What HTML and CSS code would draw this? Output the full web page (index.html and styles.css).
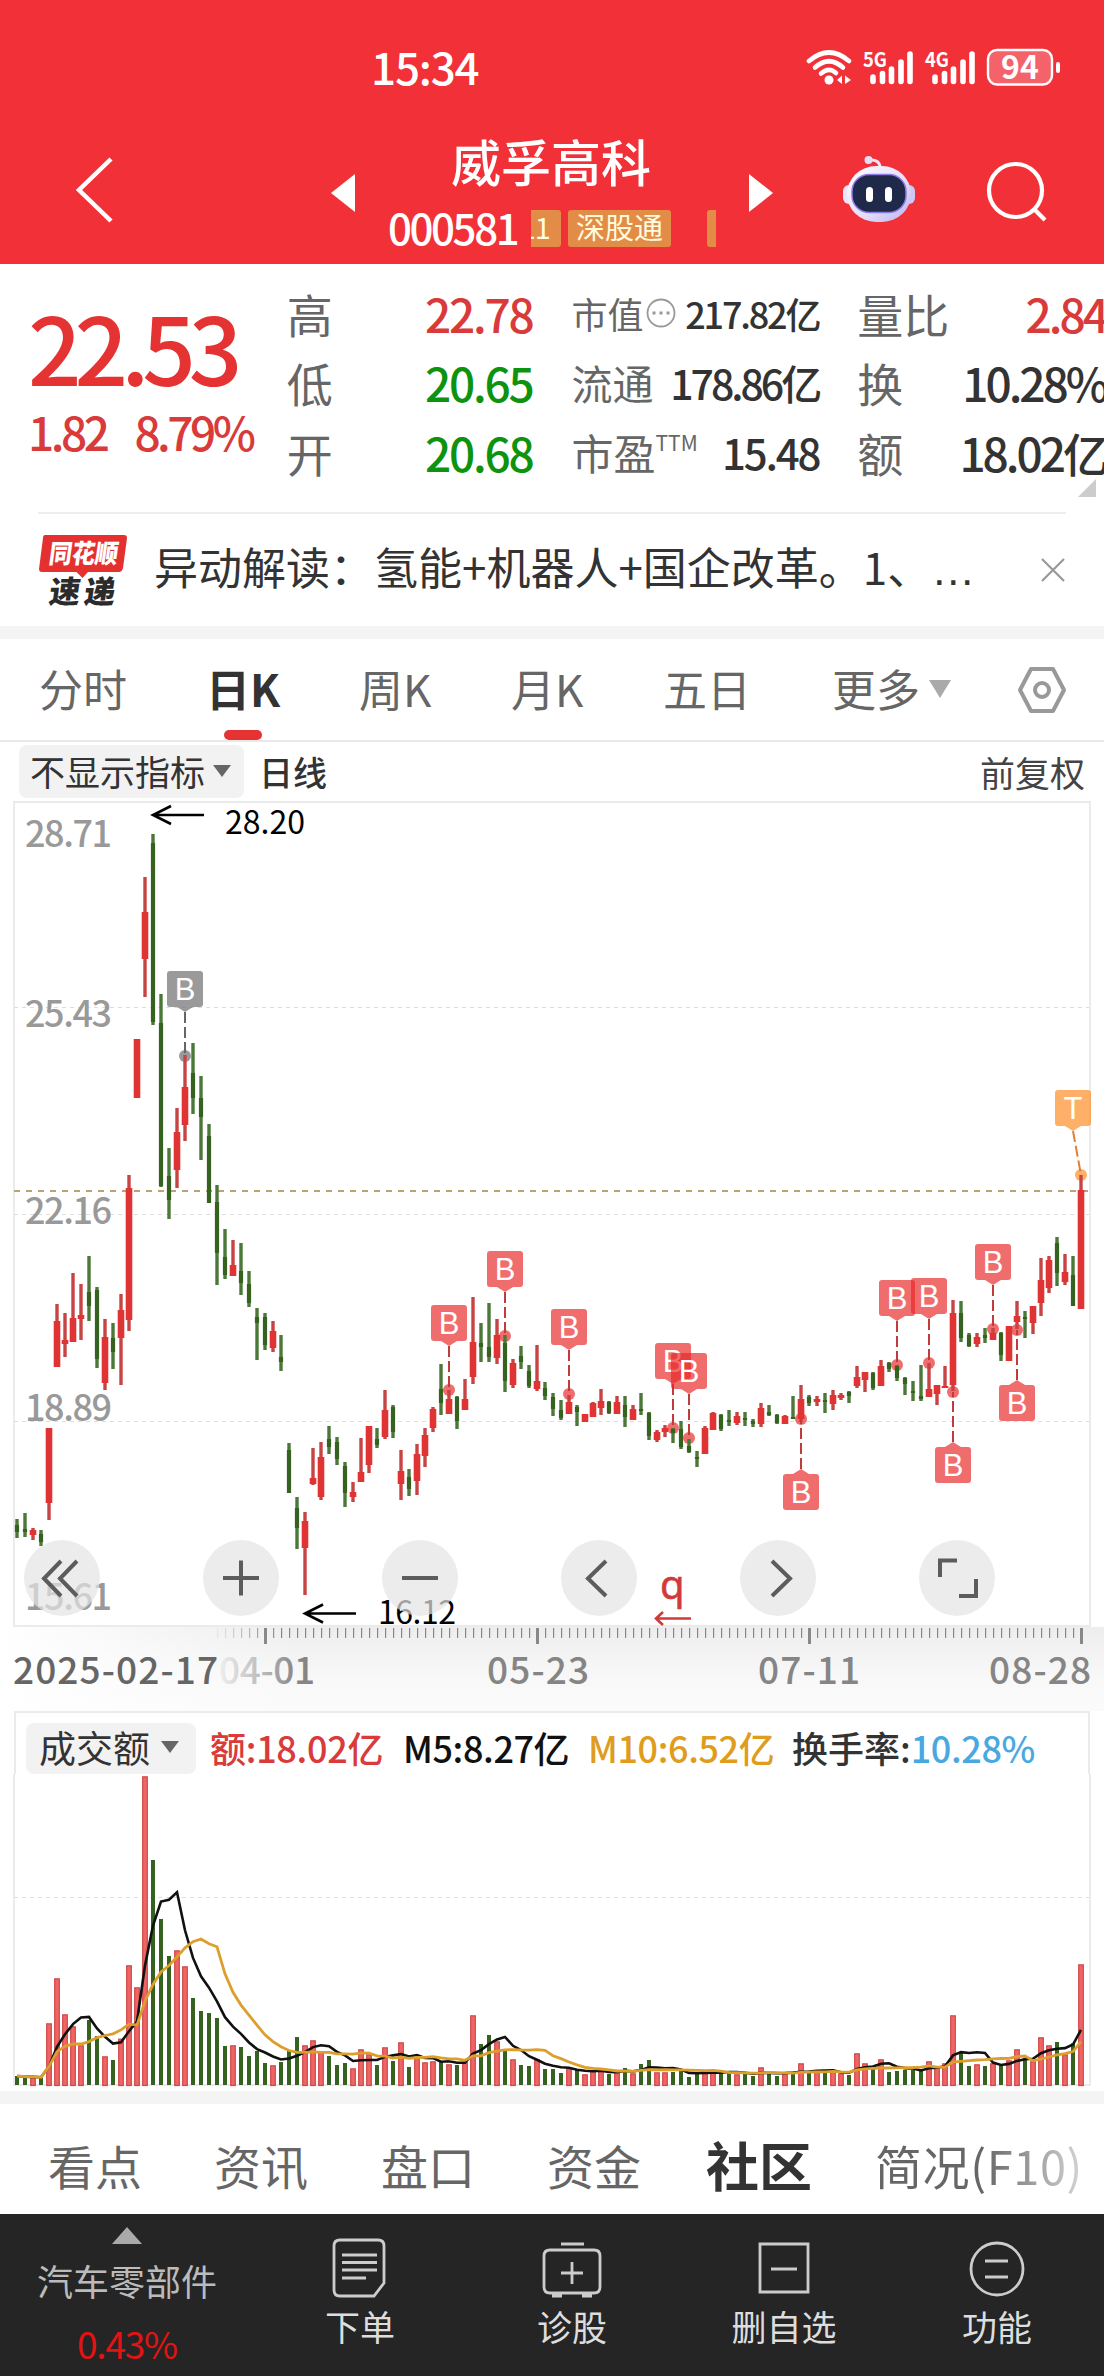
FILE: index.html
```html
<!DOCTYPE html>
<html lang="zh-CN">
<head>
    <meta charset="UTF-8">
    <meta name="viewport" content="width=device-width, initial-scale=1.0">
    <title>威孚高科 000581</title>
    <link rel="stylesheet" href="styles.css">
</head>
<body>
    <header class="top">
        <div class="status">
            <span class="clock">15:34</span>
            <svg class="status-icons" width="260" height="44" viewBox="804 46 260 44">
                <g fill="none" stroke="#fff" stroke-width="4.6" stroke-linecap="round">
                    <path d="M809 61Q829 44 849 61"/>
                    <path d="M815 67.500Q829 55 843 67.500"/>
                    <path d="M821 73.500Q829 66.500 836 73"/>
                </g>
                <circle cx="829" cy="80" r="4.500" fill="#fff"/>
                <path d="M837 80l5-4.500v8.500zM851 80l-6-4.500v8.500z" fill="#fff"/>
                <g stroke="#fff" stroke-width="5.600" stroke-linecap="round">
                    <path d="M873 77v4.500M882.500 73.500v8M891.500 69v12.500M901 62v19.500M910 54v27.500"/>
                    <path d="M935 77v4.500M944.500 73.500v8M953.500 69v12.500M963 62v19.500M972 54v27.500"/>
                </g>
                <text class="net" x="863" y="67" textLength="24" lengthAdjust="spacingAndGlyphs">5G</text>
                <text class="net" x="925" y="67" textLength="24" lengthAdjust="spacingAndGlyphs">4G</text>
                <rect x="988" y="50" width="64" height="34.500" rx="9" fill="#f5636a" stroke="#fff" stroke-width="2.400"/>
                <rect x="1056" y="62" width="4" height="11" rx="2" fill="#fff"/>
                <text class="battery" x="1001" y="79">94</text>
            </svg>
        </div>
        <div class="titlebar">
            <svg class="back" width="40" height="68" viewBox="0 0 40 68"><path d="M36 3L4 34l32 31" fill="none" stroke="#fff" stroke-width="4.500"/></svg>
            <svg class="prev" width="24" height="38" viewBox="0 0 24 38"><path d="M24 0v38L0 19z" fill="#fff"/></svg>
            <div class="title">
                <div class="name">威孚高科</div>
                <div class="code-line">
                    <span class="code">000581</span>
                    <div class="tags">
                        <span class="tag tag-cut">L1</span>
                        <span class="tag">深股通</span>
                        <span class="tag tag-next"></span>
                    </div>
                </div>
            </div>
            <svg class="next" width="24" height="38" viewBox="0 0 24 38"><path d="M0 0v38l24-19z" fill="#fff"/></svg>
            <svg class="robot" width="74" height="70" viewBox="843 154 74 70">
                <defs>
                    <linearGradient id="shell" x1="0" y1="0" x2="1" y2="1">
                        <stop offset="0" stop-color="#fff"/>
                        <stop offset=".6" stop-color="#e3dcfa"/>
                        <stop offset="1" stop-color="#b9b3ee"/>
                    </linearGradient>
                </defs>
                <path d="M870 160q11-1 11 8" fill="none" stroke="#eee6f5" stroke-width="3"/>
                <circle cx="869.500" cy="160" r="4" fill="#e6def3"/>
                <rect x="844" y="185" width="12" height="19" rx="6" fill="#eae5fa"/>
                <rect x="904" y="185" width="12" height="19" rx="6" fill="#cdc9f2"/>
                <rect x="848" y="166" width="64" height="56" rx="29" fill="url(#shell)"/>
                <rect x="853" y="174.500" width="54" height="38" rx="17" fill="#1f2a4a" stroke="#8d7be6" stroke-width="1.500"/>
                <rect x="867" y="187" width="7" height="15" rx="3.500" fill="#fff"/>
                <rect x="886" y="187" width="7" height="15" rx="3.500" fill="#fff"/>
            </svg>
            <svg class="search" width="64" height="64" viewBox="986 160 64 64" fill="none" stroke="#fff" stroke-width="4.200">
                <circle cx="1016.500" cy="190.500" r="26.500"/>
                <path d="M1035 209l11 11"/>
            </svg>
        </div>
    </header>

    <section class="quote">
        <div class="price-box">
            <div class="price">22.53</div>
            <div class="change"><span>1.82</span><span>8.79%</span></div>
        </div>
        <div class="col col-a">
            <div class="cell"><span class="label">高</span><span class="val up">22.78</span></div>
            <div class="cell"><span class="label">低</span><span class="val down">20.65</span></div>
            <div class="cell"><span class="label">开</span><span class="val down">20.68</span></div>
        </div>
        <div class="col col-b">
            <div class="cell cell-s"><span class="label">市值</span><svg class="info" width="30" height="32" viewBox="0 0 30 32"><circle cx="15" cy="16" r="13.500" fill="none" stroke="#999" stroke-width="1.800"/><path d="M6.500 16h3M13.500 16h3M20.500 16h3" stroke="#999" stroke-width="3"/></svg><span class="val">217.82亿</span></div>
            <div class="cell cell-m"><span class="label">流通</span><span class="val">178.86亿</span></div>
            <div class="cell cell-l"><span class="label">市盈</span><span class="ttm">TTM</span><span class="val">15.48</span></div>
        </div>
        <div class="col col-c">
            <div class="cell"><span class="label">量比</span><span class="val up">2.84</span></div>
            <div class="cell"><span class="label">换</span><span class="val">10.28%</span></div>
            <div class="cell"><span class="label">额</span><span class="val">18.02亿</span></div>
        </div>
        <i class="corner"></i>
    </section>

    <section class="news">
        <svg class="news-logo" width="90" height="76" viewBox="38 530 90 76">
            <path d="M45 533h79q3 0 3 3l-4 30q-1 4-4 4H88l-5.500 6-6-6H42q-3 0-3-3l4-31q0-3 2-3z" fill="#e53030"/>
            <text class="logo-a" transform="translate(48 561) skewX(-8)" textLength="69" lengthAdjust="spacingAndGlyphs">同花顺</text>
            <text class="logo-b" transform="translate(48 601) skewX(-8)">速</text>
            <text class="logo-b" transform="translate(83 601) skewX(-8)">递</text>
        </svg>
        <span class="news-text">异动解读：氢能+机器人+国企改革。1、<span class="dots">…</span></span>
        <svg class="close" width="24" height="24" viewBox="0 0 24 24"><path d="M1 1l22 22M23 1L1 23" stroke="#999" stroke-width="2.200"/></svg>
    </section>

    <nav class="periods">
        <span>分时</span>
        <span class="active">日K</span>
        <span>周K</span>
        <span>月K</span>
        <span>五日</span>
        <span>更多<svg width="22" height="18" viewBox="0 0 22 18"><path d="M0 0h22L11 18z" fill="#aaa"/></svg></span>
        <svg class="gear" width="50" height="48" viewBox="0 0 50 48" fill="none" stroke="#999" stroke-width="4" stroke-linejoin="round">
            <path d="M14 3h22l11 21-11 21H14L3 24z"/>
            <circle cx="25" cy="24" r="7"/>
        </svg>
    </nav>

    <div class="indicator">
        <span class="chip">不显示指标<i class="caret"></i></span>
        <span class="line-name">日线</span>
        <span class="adjust">前复权</span>
    </div>

    <div class="kchart">
        <svg id="kline" width="1104" height="826" viewBox="0 801 1104 826"></svg>
        <div class="controls">
            <button><svg viewBox="0 0 76 76"><path d="M37 21L20 38.500 37 56M53 21L36 38.500 53 56"/></svg></button>
            <button><svg viewBox="0 0 76 76"><path d="M20 38h36M38 20.500v35"/></svg></button>
            <button><svg viewBox="0 0 76 76"><path d="M20 38h36"/></svg></button>
            <button><svg viewBox="0 0 76 76"><path d="M45 21L27 38.500 45 56"/></svg></button>
            <button><svg viewBox="0 0 76 76"><path d="M32 21l18 17.500L32 56"/></svg></button>
            <button><svg viewBox="0 0 76 76"><path d="M21 37V20.500h17M57 39v17H40"/></svg></button>
        </div>
    </div>

    <div class="axis">
        <svg id="axis" width="1104" height="84" viewBox="0 1627 1104 84"></svg>
    </div>

    <div class="volume">
        <div class="vol-head">
            <span class="chip">成交额<i class="caret"></i></span>
            <span class="v-amt">额:18.02亿</span>
            <span class="v-m5">M5:8.27亿</span>
            <span class="v-m10">M10:6.52亿</span>
            <span class="v-rate">换手率:<b>10.28%</b></span>
        </div>
        <svg id="vol" width="1104" height="313" viewBox="0 1774 1104 313"></svg>
    </div>

    <nav class="tabs">
        <span>看点</span>
        <span>资讯</span>
        <span>盘口</span>
        <span>资金</span>
        <span class="active">社区</span>
        <span class="fade">简况(F10)</span>
    </nav>

    <footer class="bottom">
        <div class="sector">
            <svg width="30" height="17" viewBox="0 0 30 17"><path d="M0 17h30L15 0z" fill="#aaa"/></svg>
            <span class="sector-name">汽车零部件</span>
            <span class="sector-rate">0.43%</span>
        </div>
        <div class="item">
            <svg viewBox="0 0 64 64"><path d="M12 4h38q6 0 6 6v37L46 60H12q-6 0-6-6V10q0-6 6-6zM14 19h35M14 26.500h35M14 34h35M14 42h24"/></svg>
            <span>下单</span>
        </div>
        <div class="item">
            <svg viewBox="0 0 64 64"><path d="M10 14h44q6 0 6 6v31q0 6-6 6H10q-6 0-6-6V20q0-6 6-6zM21 8h23M32 26v22M21 37h22M12 60h10M42 60h10"/></svg>
            <span>诊股</span>
        </div>
        <div class="item">
            <svg viewBox="0 0 64 64"><path d="M8 8h48v48H8zM19 33h26"/></svg>
            <span>删自选</span>
        </div>
        <div class="item">
            <svg viewBox="0 0 64 64"><circle cx="32" cy="33" r="26"/><path d="M20 25h23M20 41h23"/></svg>
            <span>功能</span>
        </div>
    </footer>
    <script src="chart.js"></script>
</body>
</html>
```
FILE: styles.css
```css
* {
    box-sizing: border-box;
}
body {
    margin: 0;
    width: 1104px;
    background-color: #fff;
    color: #333;
    font-family: "Noto Sans CJK SC", sans-serif;
    line-height: 1;
}
svg {
    display: block;
    flex: none;
}
span {
    white-space: nowrap;
}

/* header */
.top {
    height: 264px;
    background-color: #f23037;
    color: #fff;
}
.status {
    display: flex;
    align-items: center;
    justify-content: space-between;
    height: 136px;
    padding: 0 40px 0 371px;
}
.clock {
    font-size: 44px;
    font-weight: 500;
    letter-spacing: -1.2px;
    padding-bottom: 4px;
}
.net {
    font-size: 20px;
    font-weight: bold;
    fill: #fff;
}
.battery {
    font-size: 32px;
    font-weight: bold;
    fill: #fff;
}
.titlebar {
    display: flex;
    height: 128px;
}
.back {
    margin: 20px 0 0 75px;
}
.prev {
    margin: 38px 0 0 216px;
}
.title {
    width: 361px;
    margin-left: 33px;
}
.name {
    margin-left: 63px;
    font-size: 50px;
    line-height: 48px;
    font-weight: 500;
}
.code-line {
    display: flex;
    align-items: center;
    height: 37px;
    margin-top: 26px;
}
.code {
    width: 143px;
    font-size: 42px;
    font-weight: 500;
    letter-spacing: -2.4px;
    padding-bottom: 4px;
}
.tags {
    display: flex;
    width: 185px;
    height: 37px;
    overflow: hidden;
}
.tag {
    flex: none;
    height: 37px;
    padding: 0 8px;
    margin-right: 7px;
    border-radius: 3px;
    background-color: #e38c47;
    color: #fffbdc;
    font-size: 29px;
    line-height: 33px;
}
.tag-cut {
    width: 50px;
    margin-left: -20px;
}
.tag-next {
    width: 40px;
    margin-left: 29px;
}
.next {
    margin: 38px 0 0 0;
}
.robot {
    margin: 18px 0 0 69px;
}
.search {
    margin: 24px 0 0 69px;
}

/* quote */
.quote {
    position: relative;
    display: flex;
    height: 248px;
    padding: 14px 0 0 28px;
}
.price-box {
    width: 259px;
    color: #e53232;
}
.price {
    margin-top: 20px;
    font-size: 94px;
    font-weight: 500;
    line-height: 94px;
    letter-spacing: -7px;
}
.change {
    display: flex;
    margin-top: 14px;
    gap: 28px;
    font-size: 46px;
    font-weight: 500;
    line-height: 50px;
    letter-spacing: -3.5px;
    color: #d93a3a;
}
.cell {
    display: flex;
    align-items: center;
    height: 69.5px;
    font-size: 46px;
}
.label {
    color: #666;
}
.val {
    margin-left: auto;
    font-weight: 500;
    letter-spacing: -2.2px;
    margin-right: -1px;
}
.up {
    color: #d93a3a;
}
.down {
    color: #0d930d;
}
.col-a {
    width: 245px;
}
.col-b {
    width: 247px;
    margin-left: 40px;
}
.col-c {
    width: 247px;
    margin-left: 39px;
}
.cell-s {
    font-size: 36px;
}
.cell-m {
    font-size: 41px;
}
.cell-l {
    font-size: 42px;
}
.cell-m .val {
    letter-spacing: -3px;
}
.col-c .val {
    letter-spacing: -3px;
    margin-right: -2px;
}
.info {
    margin-left: 2px;
}
.ttm {
    align-self: flex-start;
    margin-top: 15px;
    font-size: 21px;
    color: #666;
}
.corner {
    position: absolute;
    right: 8px;
    bottom: 15px;
    border-left: 18px solid transparent;
    border-bottom: 18px solid #ccc;
}

/* news */
.news {
    display: flex;
    align-items: center;
    height: 114px;
    margin: 0 38px;
    border-top: 2px solid #eee;
}
.logo-a {
    font-size: 26px;
    font-weight: 900;
    fill: #fff;
}
.logo-b {
    font-size: 31px;
    font-weight: 900;
    fill: #2b2b2b;
}
.news-text {
    margin: -4px 0 0 26px;
    width: 840px;
    font-size: 44px;
}
.dots {
    font-family: "Liberation Sans", sans-serif;
}
.close {
    margin-left: auto;
    margin-right: 1px;
}

/* periods */
.periods {
    display: grid;
    grid-template-columns: 167px 153px 152px 152px 169px 185px 1fr;
    align-items: center;
    height: 116px;
    padding-left: 39px;
    border-top: 13px solid #f4f4f4;
    border-bottom: 2px solid #e8e8e8;
    color: #666;
    font-size: 44px;
}
.periods span {
    display: flex;
    align-items: center;
    padding-bottom: 3px;
}
.periods span svg {
    margin: 2px 0 0 9px;
}
.periods .active {
    position: relative;
    color: #333;
    font-weight: bold;
}
.periods .active::after {
    content: "";
    position: absolute;
    left: 18px;
    bottom: -27px;
    width: 38px;
    height: 10px;
    border-radius: 5px;
    background-color: #e53232;
}

.indicator {
    display: flex;
    align-items: center;
    height: 59px;
    padding: 0 19px 0 19px;
    font-size: 35px;
}
.chip {
    display: flex;
    align-items: center;
    height: 53px;
    padding: 0 13px 2px 11px;
    border-radius: 8px;
    background-color: #f2f2f2;
}
.caret {
    margin-left: 8px;
    border: 9px solid transparent;
    border-top: 12px solid #666;
    border-bottom: 0;
}
.line-name {
    margin-left: 15px;
    font-size: 34px;
    font-weight: 500;
}
.adjust {
    margin-left: auto;
    color: #444;
}

/* charts */
.kchart {
    position: relative;
    height: 826px;
}
.controls {
    position: absolute;
    left: 24px;
    top: 739px;
    display: flex;
    gap: 103px;
}
.controls button {
    width: 76px;
    height: 76px;
    padding: 0;
    border: none;
    border-radius: 50%;
    background-color: rgba(228, 228, 228, 0.7);
    cursor: pointer;
}
.controls path {
    fill: none;
    stroke: #5c5c5c;
    stroke-width: 4;
}
.frame {
    fill: none;
    stroke: #ebebeb;
    stroke-width: 2;
}
.grid {
    stroke: #ddd;
    stroke-dasharray: 4 4;
}
.last-price {
    stroke: #bfa274;
    stroke-width: 1.8;
    stroke-dasharray: 6 6;
}
.y-label {
    font-size: 36px;
    font-weight: 500;
    fill: #999;
}
.extreme {
    font-size: 32px;
    fill: #000;
}
.arrow {
    fill: none;
    stroke: #000;
    stroke-width: 2.6;
}
.q-mark {
    font-family: "Noto Sans", sans-serif;
    font-size: 40px;
    fill: #d23a3a;
    stroke: #d23a3a;
    stroke-width: 0.6;
}
.q-arrow {
    fill: none;
    stroke: #d23a3a;
    stroke-width: 2.6;
}
.marker-text {
    font-family: "Liberation Sans", sans-serif;
    font-size: 31px;
    fill: #fff;
    text-anchor: middle;
}
.axis {
    height: 84px;
    background: linear-gradient(to right, #fff, rgba(255, 255, 255, 0) 300px), linear-gradient(#ededed, #f8f8f8 60%, #fbfbfb);
}
.date {
    font-size: 37px;
    font-weight: 500;
    fill: #858585;
}
.date-first {
    fill: #666;
}
.volume {
    height: 380px;
    background-color: #fff;
}
.vol-head {
    display: flex;
    align-items: center;
    height: 63px;
    margin: 0 14px;
    padding: 10px 0 0 10px;
    border: 2px solid #ebebeb;
    border-bottom: none;
    font-size: 36px;
}
.vol-head > span {
    flex: none;
    padding-bottom: 3px;
    font-weight: 500;
}
.vol-head .chip {
    width: 170px;
    height: 51px;
    padding-left: 13px;
    font-size: 37px;
    font-weight: normal;
}
.vol-head .caret {
    margin-left: 11px;
}
.v-amt {
    width: 193px;
    margin-left: 14px;
    color: #d93a3a;
    letter-spacing: -0.3px;
}
.v-m5 {
    width: 185px;
    color: #111;
    letter-spacing: -0.4px;
}
.v-m10 {
    width: 204px;
    color: #e09c1c;
    letter-spacing: -0.4px;
}
.v-rate b {
    font-weight: inherit;
    color: #4aa8e0;
    letter-spacing: -0.4px;
}

/* bottom tabs */
.tabs {
    display: grid;
    grid-template-columns: 166px 167px 166px 159px 169px 1fr;
    align-items: center;
    height: 123px;
    padding: 11px 0 0 48px;
    border-top: 13px solid #f4f4f4;
    font-size: 47px;
    color: #666;
}
.tabs .active {
    font-size: 53px;
    font-weight: bold;
    color: #333;
}
.fade {
    width: 215px;
    padding: 8px 0;
    letter-spacing: 0.6px;
    background: linear-gradient(to right, #666 50%, #ddd);
    -webkit-background-clip: text;
    background-clip: text;
    color: transparent;
}

.bottom {
    display: grid;
    grid-template-columns: 254px 212px 212px 212px 214px;
    height: 162px;
    background-color: #252525;
    color: #ddd;
    font-size: 35px;
}
.sector {
    display: flex;
    flex-direction: column;
    align-items: center;
    padding-top: 13px;
    color: #bbb;
}
.sector-name {
    margin-top: 18px;
    font-size: 36px;
}
.sector-rate {
    margin-top: 27px;
    color: #e01414;
    font-size: 37px;
    letter-spacing: -1.2px;
}
.item {
    display: flex;
    flex-direction: column;
    align-items: center;
    padding-top: 22px;
}
.item svg {
    width: 64px;
    height: 64px;
    margin-bottom: 8px;
    fill: none;
    stroke: #ccc;
    stroke-width: 2.8;
}
```
FILE: chart.js
```js
// [color, high, low, body top, body bottom, volume height * 3]
const days = [
    ["g",1519,1538,1525,1532,27],["g",1513,1537,1529,1532,23],["r",1528,1540,1530,1535,23],["g",1530,1546,1534,1542,21],
    ["r",1428,1520,1428,1503,185],["r",1304,1367,1321,1367,320],["r",1313,1357,1340,1344,212],["r",1273,1342,1318,1342,176],
    ["r",1284,1340,1315,1319,119],["g",1256,1321,1292,1306,195],["g",1287,1368,1290,1359,147],["r",1319,1390,1337,1383,86],
    ["g",1323,1369,1338,1352,75],["r",1294,1385,1310,1338,139],["r",1175,1331,1188,1320,359],["r",1039,1098,1039,1098,293],
    ["r",877,997,912,959,926],["g",834,1025,843,1022,675],["g",994,1187,1023,1186,498],["g",1148,1219,1176,1200,387],
    ["r",1108,1188,1132,1170,404],["r",1055,1141,1087,1125,356],["g",1043,1114,1073,1098,261],["g",1076,1160,1098,1117,222],
    ["g",1124,1203,1136,1203,216],["g",1185,1285,1202,1253,201],["g",1229,1279,1257,1275,117],["r",1240,1276,1265,1276,119],
    ["g",1243,1295,1271,1283,114],["g",1271,1307,1284,1303,87],["g",1308,1360,1317,1323,102],["g",1313,1350,1317,1345,66],
    ["r",1321,1352,1331,1348,59],["g",1335,1371,1357,1362,69],["g",1443,1493,1450,1493,102],["g",1497,1549,1508,1528,144],
    ["r",1512,1595,1521,1548,119],["r",1448,1485,1478,1484,134],["r",1442,1500,1457,1497,97],["g",1426,1454,1439,1447,87],
    ["g",1437,1465,1442,1459,60],["g",1462,1507,1466,1493,66],["r",1482,1502,1492,1497,50],["r",1438,1482,1472,1482,107],
    ["r",1426,1473,1426,1465,92],["g",1428,1448,1439,1445,60],["r",1390,1439,1410,1437,113],["g",1405,1438,1407,1432,72],
    ["r",1450,1500,1471,1484,128],["g",1469,1496,1477,1489,54],["r",1444,1495,1454,1481,83],["r",1428,1467,1435,1456,68],
    ["r",1407,1432,1409,1428,71],["g",1364,1415,1389,1403,72],["r",1390,1414,1399,1414,62],["g",1396,1429,1397,1421,60],
    ["r",1379,1410,1399,1410,70],["r",1297,1384,1342,1377,209],["g",1323,1362,1343,1347,123],["g",1303,1362,1347,1357,150],
    ["r",1319,1364,1335,1358,131],["g",1335,1392,1343,1381,107],["r",1359,1388,1363,1385,77],["g",1346,1369,1356,1362,60],
    ["g",1365,1388,1371,1386,57],["r",1345,1391,1381,1389,77],["g",1382,1400,1388,1396,48],["g",1393,1416,1397,1409,48],
    ["g",1400,1420,1410,1418,36],["r",1395,1414,1402,1414,50],["g",1405,1426,1407,1412,47],["r",1414,1422,1414,1422,32],
    ["r",1402,1417,1403,1417,42],["r",1389,1415,1401,1408,42],["g",1401,1414,1402,1413,33],["r",1396,1414,1402,1414,43],
    ["g",1396,1427,1405,1417,51],["r",1405,1420,1409,1420,35],["g",1393,1415,1409,1411,63],["g",1412,1440,1413,1436,75],
    ["r",1430,1442,1432,1440,38],["r",1425,1437,1428,1432,38],["g",1428,1443,1429,1433,39],["g",1421,1449,1429,1447,42],
    ["g",1439,1453,1446,1452,24],["g",1451,1467,1457,1459,33],["r",1426,1454,1428,1454,43],["r",1412,1430,1413,1430,43],
    ["g",1414,1431,1415,1429,40],["g",1410,1426,1420,1422,36],["r",1412,1425,1416,1423,32],["g",1412,1426,1418,1420,33],
    ["g",1419,1427,1421,1424,27],["r",1403,1427,1408,1424,53],["g",1405,1416,1412,1415,37],["g",1414,1424,1415,1423,27],
    ["r",1415,1424,1416,1424,35],["g",1396,1419,1417,1418,36],["r",1385,1422,1399,1419,65],["g",1395,1406,1397,1403,39],
    ["r",1396,1406,1399,1402,38],["g",1393,1413,1400,1402,39],["r",1390,1410,1395,1404,41],["r",1393,1400,1395,1398,35],
    ["g",1391,1403,1392,1396,30],["r",1366,1388,1377,1386,95],["r",1372,1392,1372,1380,65],["g",1372,1390,1373,1388,51],
    ["r",1360,1386,1366,1386,77],["g",1362,1372,1363,1369,39],["g",1365,1381,1366,1378,42],["g",1377,1395,1378,1384,45],
    ["g",1381,1401,1391,1393,45],["g",1365,1401,1396,1399,47],["r",1363,1397,1389,1397,71],["r",1385,1405,1385,1394,52],
    ["r",1366,1388,1386,1388,65],["r",1300,1391,1313,1385,209],["g",1301,1342,1313,1338,97],["g",1333,1347,1335,1346,57],
    ["r",1333,1347,1337,1344,62],["g",1328,1343,1335,1338,57],["r",1328,1340,1333,1340,65],["g",1332,1361,1333,1355,59],
    ["r",1326,1361,1326,1361,74],["r",1301,1329,1316,1322,107],["g",1311,1338,1317,1319,82],["r",1306,1334,1306,1323,71],
    ["r",1258,1316,1280,1303,143],["r",1256,1293,1260,1288,119],["g",1237,1286,1243,1273,129],["r",1254,1285,1272,1282,92],
    ["g",1256,1306,1275,1306,125],["r",1175,1309,1190,1309,362]
];

// [x, tag top, dot y, color, letter, dot x]
const markers = [
    [185,971,1056,"gray","B"],[449,1305,1390],[505,1251,1336],[569,1309,1394],[673,1343,1428],[689,1353,1438],
    [801,1474,1419],[897,1280,1365],[929,1278,1363],[953,1447,1392],[993,1244,1329],[1017,1385,1330],
    [1073,1090,1175,"orange","T",1081]
];
const tagColors = { red: "#e82828", gray: "#6a6a6a", orange: "#ff8a20" };
const lineColors = { red: "#c23a3a", gray: "#666", orange: "#e08030" };

const x = i => 17 + i * 8;
let html = '<rect class="frame" x="14" y="802" width="1076" height="824"/>';
for (let y of [1007.5, 1214.5, 1421.5]) {
    html += `<path class="grid" d="M14 ${y}H1089"/>`;
}
html += '<path class="last-price" d="M14 1191H1089"/>';
for (let [y, t] of [[847, "28.71"], [1027, "25.43"], [1224, "22.16"], [1421, "18.89"], [1610, "15.61"]]) {
    html += `<text class="y-label" x="25" y="${y}" textLength="87">${t}</text>`;
}

// marker dots go under the candles, tags above
for (let m of markers) {
    let c = tagColors[m[3] || "red"];
    html += `<circle cx="${m[5] || m[0]}" cy="${m[2]}" r="6" fill="${c}" fill-opacity=".68"/>`;
}
days.forEach((d, i) => {
    let [c, h, l, t, b] = d;
    let w = c == "r" ? 6.6 : 4.2;
    let wick = c == "r" ? "#c84444" : "#4b7838";
    let body = c == "r" ? "#e03434" : "#36621f";
    html += `<rect x="${x(i) - 1.7}" y="${h}" width="3.4" height="${l - h}" fill="${wick}"/>`;
    html += `<rect x="${x(i) - w / 2}" y="${t}" width="${w}" height="${Math.max(b - t, 2)}" fill="${body}"/>`;
});
for (let [mx, top, dot, color = "red", letter = "B", dx = mx] of markers) {
    let below = top > dot;
    let tip = below ? top - 5 : top + 41;
    let base = below ? top : top + 36;
    html += `<path d="M${mx} ${tip}L${dx} ${dot}" stroke="${lineColors[color]}" stroke-width="2" stroke-dasharray="11 4"/>`;
    html += `<g fill="${tagColors[color]}" fill-opacity=".68"><rect x="${mx - 18}" y="${top}" width="36" height="36" rx="3"/><path d="M${mx - 8} ${base}h16L${mx} ${tip}z"/></g>`;
    html += `<text class="marker-text" x="${mx}" y="${top + 29}">${letter}</text>`;
}
html += '<path class="arrow" d="M204 815H153M171 806L153 815 171 824"/><text class="extreme" x="225" y="834" textLength="80">28.20</text>';
html += '<path class="arrow" d="M356 1613.500H305M323 1604.500L305 1613.500 323 1622.500"/><text class="extreme" x="378" y="1624" textLength="78">16.12</text>';
html += '<text class="q-mark" x="660" y="1599">q</text><path class="q-arrow" d="M691 1618.500H656M663 1612L656 1618.500 663 1625"/>';
document.getElementById("kline").innerHTML = html;

// time axis
html = "";
for (let tx = 217; tx <= 1081; tx += 8) {
    let major = (tx - 265) % 272 == 0;
    let o = Math.min(1, (tx - 209) / 70);
    html += `<rect x="${tx - (major ? 1 : 0)}" y="1628" width="${major ? 3 : 1.2}" height="${major ? 16 : 10}" fill="#888" fill-opacity="${major ? 1 : o}"/>`;
}
html += '<defs><linearGradient id="dateFade"><stop offset="0" stop-color="#eee"/><stop offset=".45" stop-color="#bbb"/><stop offset=".8" stop-color="#858585"/></linearGradient></defs>';
html += '<text class="date date-first" x="13" y="1684" textLength="205">2025-02-17</text>';
html += '<text class="date" style="fill:url(#dateFade)" x="219" y="1684" textLength="96">04-01</text>';
for (let [dx, t] of [[487, "05-23"], [758, "07-11"], [989, "08-28"]]) {
    html += `<text class="date" x="${dx}" y="1684" textLength="102">${t}</text>`;
}
document.getElementById("axis").innerHTML = html;

// volume bars and averages
const bottom = 2085;
html = '<path class="frame" d="M14 1774V2085H1090V1774"/><path class="grid" d="M14 1897.500H1089"/>';
days.forEach((d, i) => {
    let h = d[5] / 3;
    if (d[0] == "r") {
        html += `<rect x="${x(i) - 2.3}" y="${bottom - h + 0.5}" width="4.6" height="${h}" fill="#f06464" stroke="#cf4848" stroke-width="1.2"/>`;
    } else {
        html += `<rect x="${x(i) - 2}" y="${bottom - h}" width="4" height="${h}" fill="#36621f"/>`;
    }
});
function average(n) {
    return days.map((d, i) => {
        let part = days.slice(Math.max(0, i - n + 1), i + 1);
        let sum = part.reduce((s, p) => s + p[5], 0);
        return x(i) + "," + (bottom - sum / part.length / 3).toFixed(1);
    }).join(" ");
}
html += `<polyline points="${average(5)}" fill="none" stroke="#111" stroke-width="2.6"/>`;
html += `<polyline points="${average(10)}" fill="none" stroke="#dd9f2c" stroke-width="2.8"/>`;
document.getElementById("vol").innerHTML = html;
```
